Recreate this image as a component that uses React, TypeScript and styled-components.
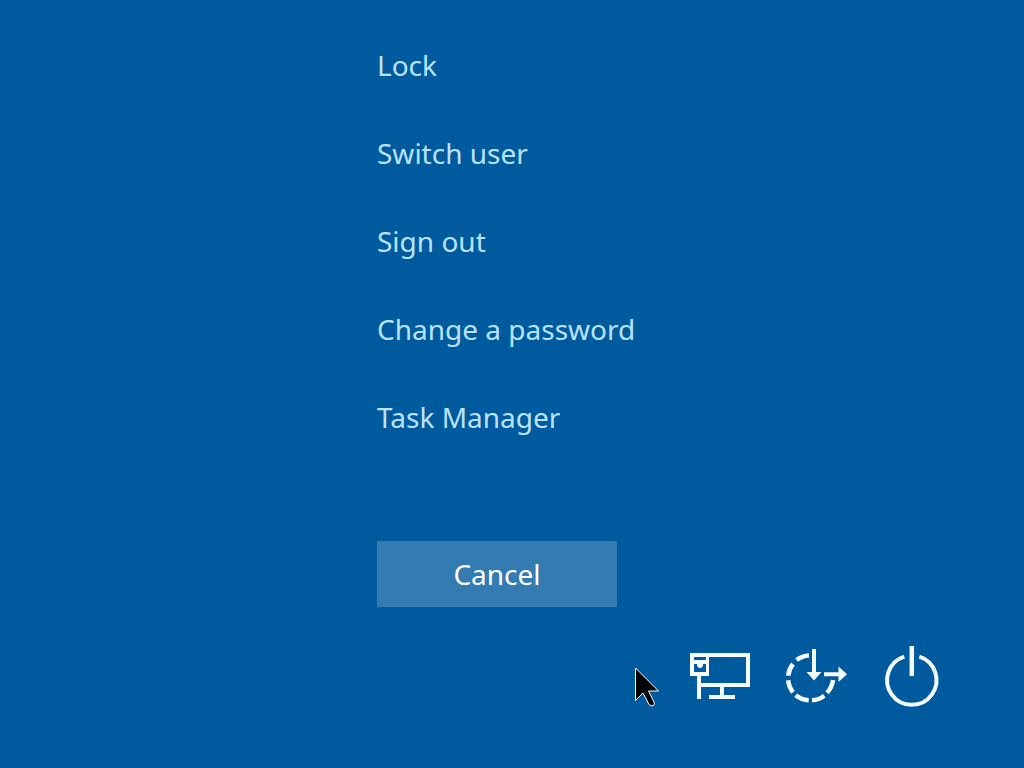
import React from "react";
import styled, { createGlobalStyle } from "styled-components";

const GlobalStyle = createGlobalStyle`
  * { box-sizing: border-box; }
  body {
    margin: 0;
    background: #005a9e;
    font-family: "Segoe UI", "Noto Sans", "Open Sans", sans-serif;
  }
`;

const Screen = styled.main`
  position: relative;
  display: flex;
  flex-direction: column;
  min-height: 100vh;
  padding: 21px 64px 42px;
  background: #005a9e;
`;

const Options = styled.div`
  display: flex;
  flex-direction: column;
  align-items: flex-start;
  width: 270px;
  margin: 0 auto;
`;

const Menu = styled.nav`
  display: flex;
  flex-direction: column;
  align-items: flex-start;
`;

const TextButton = styled.button`
  border: 0;
  padding: 0;
  font: inherit;
  font-size: 28px;
  line-height: 40px;
  white-space: nowrap;
  cursor: default;
`;

const MenuItem = styled(TextButton)`
  height: 88px;
  background: transparent;
  color: #b9e3ff;
`;

const CancelButton = styled(TextButton)`
  width: 240px;
  height: 66px;
  margin-top: 80px;
  background: #337bb1;
  color: #ffffff;
`;

const Tray = styled.footer`
  display: flex;
  justify-content: flex-end;
  margin-top: auto;
`;

const TrayButton = styled.button`
  width: 96px;
  height: 96px;
  border: 0;
  padding: 0;
  background: transparent;
  color: #f4fcff;
  cursor: default;

  svg { display: block; }
`;

const Pointer = styled.svg`
  position: absolute;
  left: 62%;
  top: 666px;
  pointer-events: none;
`;

const NetworkIcon = () => (
  <svg width="96" height="96" viewBox="0 0 96 96" fill="none" stroke="currentColor" strokeWidth="4" aria-hidden="true">
    <path d="M30 25H76V55H29" />
    <path d="M27 45V69" />
    <path d="M50 57V66" />
    <path d="M37 67H63" />
    <path
      d="M18 23H37V46H18ZM22 27V30H34V27ZM22 34V42H34V34H31V36L29 38H27L25 36V34Z"
      fill="currentColor"
      fillRule="evenodd"
      stroke="none"
    />
  </svg>
);

const EaseIcon = () => (
  <svg width="96" height="96" viewBox="0 0 96 96" fill="none" stroke="currentColor" strokeWidth="4" aria-hidden="true">
    <g strokeWidth="4.5">
      <path d="M28.500 30A22.700 22.700 0 0 1 41 25.500" />
      <path d="M20.200 45.700A22.700 22.700 0 0 1 25 34" />
      <path d="M25 62.300A22.700 22.700 0 0 1 20.200 50.300" />
      <path d="M40.700 70.300A22.700 22.700 0 0 1 27.700 65.300" />
      <path d="M56.300 65.700A22.700 22.700 0 0 1 44 70.300" />
      <path d="M65 50A22.700 22.700 0 0 1 59 62.700" />
    </g>
    <path d="M46 19V44M56 44.300H72" />
    <path d="M38.500 42H53.500L46 50.500ZM70.500 36.500L79 44.300L70.500 52Z" fill="currentColor" stroke="none" />
  </svg>
);

const PowerIcon = () => (
  <svg width="96" height="96" viewBox="0 0 96 96" fill="none" stroke="currentColor" strokeWidth="4" aria-hidden="true">
    <path d="M40.300 26.600A24.700 24.700 0 1 0 55.300 26.600" />
    <path d="M47.800 16V46" strokeWidth="4.500" />
  </svg>
);

const actions = ["Lock", "Switch user", "Sign out", "Change a password", "Task Manager"];

const trayItems = [
  { label: "Network", Icon: NetworkIcon },
  { label: "Ease of access", Icon: EaseIcon },
  { label: "Power", Icon: PowerIcon },
];

export default function App() {
  return (
    <>
      <GlobalStyle />
      <Screen>
        <Options>
          <Menu aria-label="Security options">
            {actions.map((action) => (
              <MenuItem key={action} type="button">{action}</MenuItem>
            ))}
          </Menu>
          <CancelButton type="button">Cancel</CancelButton>
        </Options>
        <Tray>
          {trayItems.map(({ label, Icon }) => (
            <TrayButton key={label} type="button" aria-label={label}>
              <Icon />
            </TrayButton>
          ))}
        </Tray>
        <Pointer width="28" height="44" viewBox="0 0 28 44" aria-hidden="true">
          <path
            d="M0.500 2V34.500L8 27L14 38.500Q16 41 18.500 39.500Q20 38 19 36L13.500 25H23.500Z"
            fill="#000"
            stroke="#fff"
            strokeWidth="1"
          />
        </Pointer>
      </Screen>
    </>
  );
}
